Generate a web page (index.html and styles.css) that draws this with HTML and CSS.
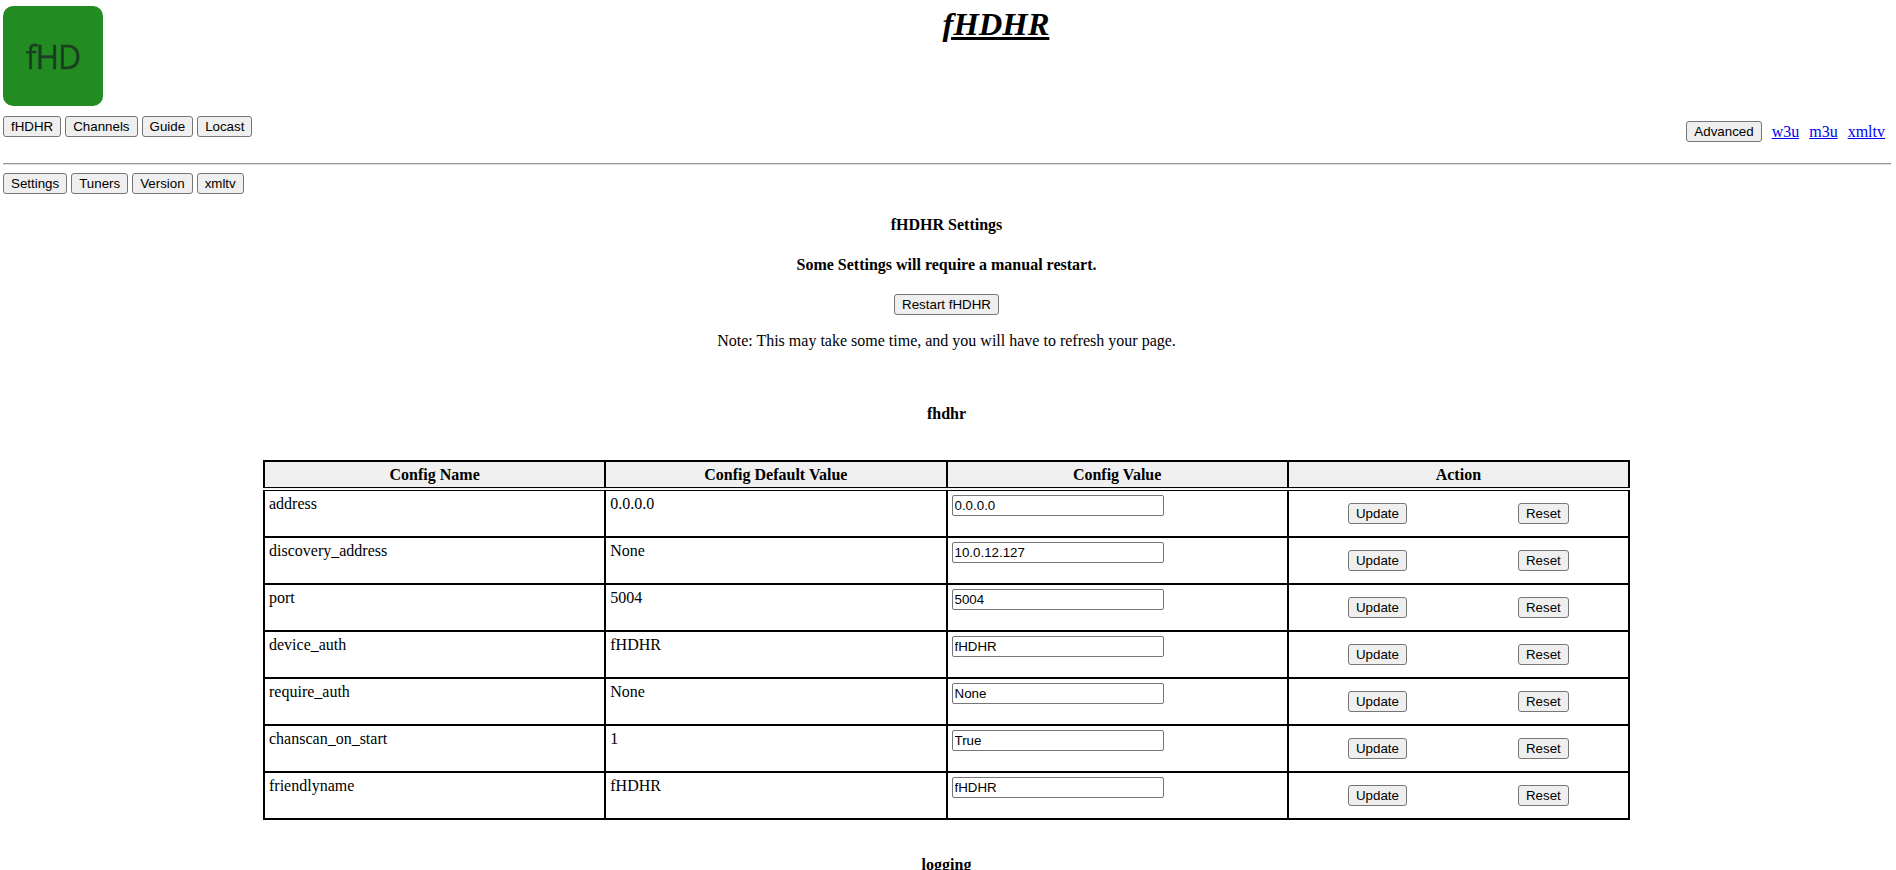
FILE: index.html
```html
<!DOCTYPE html>
<html lang="en">
<head>
<meta charset="UTF-8">
<title>fHDHR</title>
<link rel="stylesheet" href="styles.css">
</head>
<body>
<header class="top">
<div class="logo"><span>fHD</span></div>
<h1><a href="#">fHDHR</a></h1>
</header>
<nav class="mainnav">
<div class="btns">
<button>fHDHR</button>
<button>Channels</button>
<button>Guide</button>
<button>Locast</button>
</div>
<div class="extras">
<button>Advanced</button>
<a href="#">w3u</a>
<a href="#">m3u</a>
<a href="#">xmltv</a>
</div>
</nav>
<hr>
<div class="btns">
<button>Settings</button>
<button>Tuners</button>
<button>Version</button>
<button>xmltv</button>
</div>
<main>
<p class="strong first">fHDHR Settings</p>
<p class="strong">Some Settings will require a manual restart.</p>
<p class="restart"><button>Restart fHDHR</button></p>
<p class="note">Note: This may take some time, and you will have to refresh your page.</p>
<h4>fhdhr</h4>
<table>
<thead>
<tr><th>Config Name</th><th>Config Default Value</th><th>Config Value</th><th>Action</th></tr>
</thead>
<tbody>
<tr><td>address</td><td>0.0.0.0</td><td><input value="0.0.0.0"></td><td><div class="acts"><button>Update</button><button>Reset</button></div></td></tr>
<tr><td>discovery_address</td><td>None</td><td><input value="10.0.12.127"></td><td><div class="acts"><button>Update</button><button>Reset</button></div></td></tr>
<tr><td>port</td><td>5004</td><td><input value="5004"></td><td><div class="acts"><button>Update</button><button>Reset</button></div></td></tr>
<tr><td>device_auth</td><td>fHDHR</td><td><input value="fHDHR"></td><td><div class="acts"><button>Update</button><button>Reset</button></div></td></tr>
<tr><td>require_auth</td><td>None</td><td><input value="None"></td><td><div class="acts"><button>Update</button><button>Reset</button></div></td></tr>
<tr><td>chanscan_on_start</td><td>1</td><td><input value="True"></td><td><div class="acts"><button>Update</button><button>Reset</button></div></td></tr>
<tr><td>friendlyname</td><td>fHDHR</td><td><input value="fHDHR"></td><td><div class="acts"><button>Update</button><button>Reset</button></div></td></tr>
</tbody>
</table>
<h4 class="next">logging</h4>
</main>
</body>
</html>
```

FILE: styles.css
```css
/* page */
body{margin:0;padding:0 5px 0 3px;font-family:"Liberation Serif","Times New Roman",serif;font-size:16px;color:#000;background:#fff;}
button{font-family:"Liberation Sans",Arial,sans-serif;font-size:13.33px;height:21px;padding:0 7px;margin:0;background:#efefef;border:1px solid #767676;border-radius:3px;color:#000;}
input{font-family:"Liberation Sans",Arial,sans-serif;font-size:13.33px;width:212px;height:21px;box-sizing:border-box;padding:1px 2px;border:1px solid #767676;border-radius:2px;color:#000;background:#fff;}
a{color:#00e;}

/* header */
.top{display:flex;align-items:flex-start;height:116px;}
.logo{width:100px;height:100px;margin-top:6px;background:#228b22;border-radius:10px;display:flex;align-items:center;justify-content:center;}
.logo span{font-family:"Open Sans",sans-serif;font-size:32px;letter-spacing:-1px;color:#1a3f20;-webkit-text-stroke:.4px #1a3f20;filter:blur(.6px);}
h1{flex:1;margin:0 2px 0 0;padding-top:6px;text-align:center;font-size:32.6px;font-style:italic;line-height:37px;}
h1 a{color:#000;}
.mainnav{display:flex;justify-content:space-between;align-items:flex-start;}
.btns{display:flex;gap:4px;}
.extras{display:flex;align-items:center;margin-top:5px;padding-right:6px;}
.extras a{margin-left:10px;}
hr{margin:21px 0 8px;border:0;border-top:1px solid #999;border-bottom:1px solid #ddd;}

/* settings */
main{text-align:center;margin-right:1px;}
p{margin:0;}
.strong{font-weight:bold;line-height:18px;margin-top:22px;}
.restart{margin-top:20px;}
.note{margin-top:17px;}
h4{margin:55px 0 0;font-size:16px;line-height:18px;}
table{width:1367px;margin:37px auto 0;table-layout:fixed;border-collapse:collapse;border:2px solid #000;}
th{background:#f0f0f0;border:2px solid #000;border-bottom:4px double #000;height:21px;padding:2px 4px;}
td{border:2px solid #000;height:41px;padding:4px 4px 0;text-align:left;vertical-align:top;}
.acts{display:flex;justify-content:center;gap:111px;padding-top:8px;}
h4.next{margin-top:36px;}
```
